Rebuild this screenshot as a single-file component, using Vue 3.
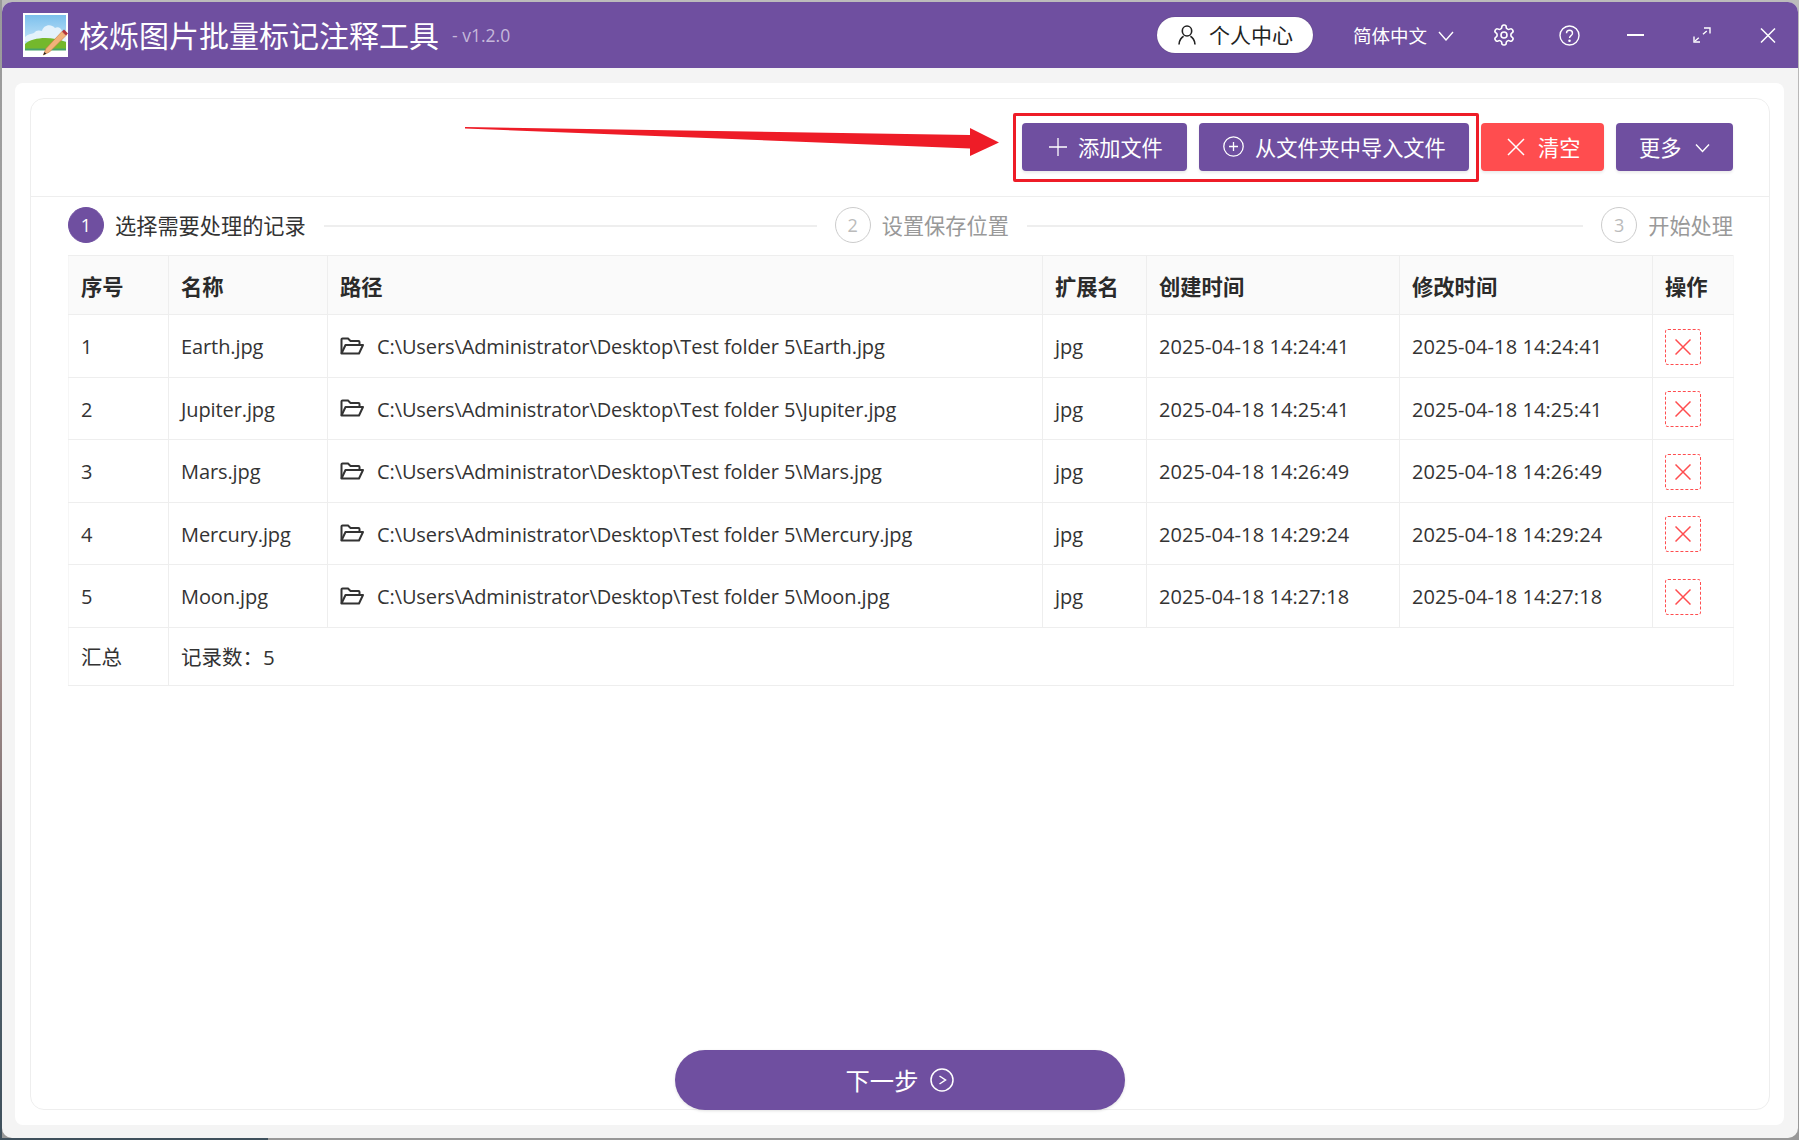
<script setup>
const rows = [
  { id: 1, name: 'Earth.jpg', time: '2025-04-18 14:24:41' },
  { id: 2, name: 'Jupiter.jpg', time: '2025-04-18 14:25:41' },
  { id: 3, name: 'Mars.jpg', time: '2025-04-18 14:26:49' },
  { id: 4, name: 'Mercury.jpg', time: '2025-04-18 14:29:24' },
  { id: 5, name: 'Moon.jpg', time: '2025-04-18 14:27:18' },
]
const base = 'C:\\Users\\Administrator\\Desktop\\Test folder 5\\'
</script>

<template>
  <div class="desk">
    <div class="window">
      <header class="titlebar">
        <svg class="logo" viewBox="0 0 45 44">
          <defs>
            <linearGradient id="sky" x1="0" y1="0" x2="0" y2="1">
              <stop offset="0" stop-color="#7cc0ec" />
              <stop offset="1" stop-color="#d4ecfb" />
            </linearGradient>
          </defs>
          <rect width="45" height="44" fill="#fff" />
          <rect x="2" y="2" width="41" height="35" fill="url(#sky)" />
          <path d="M2 24c3-3 6-3 9-4 2-3 5-3 8-2 1-6 9-8 13-3 3-2 6 0 7 3 2 0 3 1 4 2v8H2z" fill="#e4f2fb" />
          <path d="M2 31c8-7 26-8 41-2v8H2z" fill="#74b82c" />
          <rect x="2" y="35.500" width="41" height="2" fill="#46a36a" />
          <path d="M20.300 42l2.700-6.500 16-17 4 4-16.500 16.500z" fill="#f2b27a" stroke="#c77a3c" stroke-width=".6" />
          <path d="M39 18.500l2-2 4 4-2 2z" fill="#b4333a" />
          <path d="M20.300 42l1.200-3 1.800 1.700z" fill="#222" />
        </svg>
        <h1 class="title">核烁图片批量标记注释工具</h1>
        <span class="version">- v1.2.0</span>
        <div class="bar-right">
          <div class="pill">
            <svg class="user" viewBox="0 0 18 20" fill="none" stroke="#222" stroke-width="1.600">
              <ellipse cx="9" cy="6" rx="4.700" ry="5" />
              <path d="M1 19.500c0-4.500 3-7.500 4.600-8.300M17 19.500c0-4.500-3-7.500-4.600-8.300" />
            </svg>
            <span class="pill-text">个人中心</span>
          </div>
          <div class="lang">
            <span>简体中文</span>
            <svg class="lang-chev" viewBox="0 0 16 10" fill="none" stroke="#fff" stroke-width="1.400"><path d="M1 1l7 8 7-8" /></svg>
          </div>
          <svg class="gear" viewBox="0 0 24 24" fill="none" stroke="#fff" stroke-width="1.600">
            <path d="M12.220 2h-.440a2 2 0 0 0-2 2v.180a2 2 0 0 1-1 1.730l-.430.250a2 2 0 0 1-2 0l-.150-.080a2 2 0 0 0-2.730.730l-.220.380a2 2 0 0 0 .730 2.730l.150.100a2 2 0 0 1 1 1.720v.510a2 2 0 0 1-1 1.740l-.150.090a2 2 0 0 0-.730 2.730l.220.380a2 2 0 0 0 2.730.730l.150-.080a2 2 0 0 1 2 0l.430.250a2 2 0 0 1 1 1.730V20a2 2 0 0 0 2 2h.440a2 2 0 0 0 2-2v-.180a2 2 0 0 1 1-1.730l.430-.250a2 2 0 0 1 2 0l.150.080a2 2 0 0 0 2.730-.730l.220-.390a2 2 0 0 0-.730-2.730l-.150-.080a2 2 0 0 1-1-1.740v-.500a2 2 0 0 1 1-1.740l.150-.090a2 2 0 0 0 .730-2.730l-.220-.380a2 2 0 0 0-2.730-.730l-.150.080a2 2 0 0 1-2 0l-.430-.250a2 2 0 0 1-1-1.730V4a2 2 0 0 0-2-2z" />
            <circle cx="12" cy="12" r="3" />
          </svg>
          <svg class="help" viewBox="0 0 21 21" fill="none" stroke="#fff" stroke-width="1.400">
            <circle cx="10.500" cy="10.500" r="9.500" />
            <path d="M7.500 8.200c0-4 6-4 6 0 0 2.400-3 2.400-3 4.800" />
            <circle cx="10.500" cy="15.800" r=".6" fill="#fff" />
          </svg>
          <svg class="min" viewBox="0 0 17 2"><rect width="17" height="2" fill="#fff" /></svg>
          <svg class="expand" viewBox="0 0 18 16" fill="none" stroke="#fff" stroke-width="1.400">
            <path d="M2 14L16 2" stroke-dasharray="5 5.500" />
            <path d="M1 9.500V15h6M11 1h6v5.500" />
          </svg>
          <svg class="close" viewBox="0 0 16 15" fill="none" stroke="#fff" stroke-width="1.500"><path d="M1 .5l14 14M15 .5l-14 14" /></svg>
        </div>
      </header>

      <main class="panel">
        <section class="card">
          <div class="toolbar">
            <button class="btn add" type="button">
              <svg class="ic-plus" viewBox="0 0 18 18" stroke="#fff" stroke-width="1.300"><path d="M9 0v18M0 9h18" /></svg>
              <span>添加文件</span>
            </button>
            <button class="btn import" type="button">
              <svg class="ic-circle" viewBox="0 0 21 21" fill="none" stroke="#fff" stroke-width="1.300">
                <circle cx="10.500" cy="10.500" r="9.700" /><path d="M10.500 6v9M6 10.500h9" />
              </svg>
              <span>从文件夹中导入文件</span>
            </button>
            <button class="btn clear" type="button">
              <svg class="ic-x" viewBox="0 0 18 18" stroke="#fff" stroke-width="1.500"><path d="M1 1l16 16M17 1L1 17" /></svg>
              <span>清空</span>
            </button>
            <button class="btn more" type="button">
              <span>更多</span>
              <svg class="ic-chev" viewBox="0 0 15 10" fill="none" stroke="#fff" stroke-width="1.400"><path d="M1 1.500l6.500 7 6.500-7" /></svg>
            </button>
          </div>

          <div class="highlight"></div>
          <svg class="arrow" viewBox="0 0 540 32">
            <path d="M0 0L0 1.500L505 21.500V29L534 15.500L505 1V8Z" fill="#ee1c27" />
          </svg>

          <div class="steps">
            <div class="step active"><span class="num">1</span><span class="label">选择需要处理的记录</span></div>
            <div class="line first"></div>
            <div class="step"><span class="num">2</span><span class="label">设置保存位置</span></div>
            <div class="line"></div>
            <div class="step"><span class="num">3</span><span class="label">开始处理</span></div>
          </div>

          <div class="table-wrap">
            <table class="table">
              <colgroup>
                <col class="c-id" /><col class="c-name" /><col class="c-path" /><col class="c-ext" />
                <col class="c-time" /><col class="c-time" /><col class="c-op" />
              </colgroup>
              <thead>
                <tr>
                  <th>序号</th><th>名称</th><th>路径</th><th>扩展名</th><th>创建时间</th><th>修改时间</th><th>操作</th>
                </tr>
              </thead>
              <tbody>
                <tr v-for="r in rows" :key="r.id">
                  <td>{{ r.id }}</td>
                  <td class="tight">{{ r.name }}</td>
                  <td>
                    <div class="path">
                      <svg class="folder" viewBox="0 0 24 18" fill="none" stroke="#333" stroke-width="2">
                        <path d="M1.500 16.500V2.500a1 1 0 0 1 1-1h5.500l2.500 2.500h8a1 1 0 0 1 1 1V8" />
                        <path d="M1.500 16.500L5.500 8H23l-4 8.500z" stroke-linejoin="round" />
                      </svg>
                      <span class="tight">{{ base }}{{ r.name }}</span>
                    </div>
                  </td>
                  <td>jpg</td>
                  <td class="time">{{ r.time }}</td>
                  <td class="time">{{ r.time }}</td>
                  <td>
                    <div class="del">
                      <svg viewBox="0 0 16 16" stroke="#ff4d4f" stroke-width="1.500"><path d="M.500.500l15 15M15.500.500l-15 15" /></svg>
                    </div>
                  </td>
                </tr>
                <tr class="sum">
                  <td>汇总</td>
                  <td colspan="6">记录数：5</td>
                </tr>
              </tbody>
            </table>
          </div>

          <button class="next" type="button">
            <span class="next-text">下一步</span>
            <svg viewBox="0 0 24 24" fill="none" stroke="#fff" stroke-width="1.500">
              <circle cx="12" cy="12" r="11" /><path d="M9.500 8l6 4-6 4" />
            </svg>
          </button>
        </section>
      </main>
    </div>
  </div>
</template>

<style>
html, body { margin: 0; padding: 0; background: #a9a8a8; }
</style>

<style scoped>
* { box-sizing: border-box; }
.desk {
  position: relative;
  width: 1799px;
  height: 1140px;
  padding: 2px 1px 2px 2px;
  background: linear-gradient(180deg, #bcbbbb 0, #a8a8a8 50%, #989898 100%);
  overflow: hidden;
  font-family: "Open Sans", "Noto Sans CJK SC", sans-serif;
  color: #333;
}
.desk::before {
  content: "";
  position: absolute;
  left: 0;
  top: 0;
  width: 2px;
  height: 100%;
  background: linear-gradient(180deg, #9a9a9a 0, #a8a8a8 50%, #a08c8a 60%, #8a7a7a 68%, #55646e 78%, #3f505c 100%);
}
.desk::after {
  content: "";
  position: absolute;
  left: 0;
  bottom: 0;
  width: 268px;
  height: 2px;
  background: #3f505c;
}
.window {
  position: relative;
  z-index: 1;
  height: 1136px;
  display: flex;
  flex-direction: column;
  background: #f4f4f4;
  border-radius: 10px;
  overflow: hidden;
}
.titlebar {
  flex: 0 0 66px;
  display: flex;
  align-items: center;
  padding: 0 22px 0 21px;
  background: #6f4fa0;
  color: #fff;
}
.logo { width: 45px; height: 44px; margin-top: -1px; }
.title {
  margin: -2px 0 0 11px;
  font-size: 30px;
  font-weight: 400;
  line-height: 40px;
  font-family: "Noto Sans CJK SC", sans-serif;
}
.version { margin-left: 13px; font-size: 17.500px; color: #c5b8db; }
.bar-right { margin-left: auto; display: flex; align-items: center; }
.pill {
  width: 156px;
  height: 36px;
  border-radius: 18px;
  background: #fff;
  display: flex;
  align-items: center;
  padding-left: 21px;
  gap: 13px;
  color: #222;
  font-size: 21px;
  box-shadow: 0 0 1px rgba(0,0,0,.4);
}
.pill-text { margin-top: -2px; }
.user { width: 18px; height: 20px; }
.lang { display: flex; align-items: center; margin-left: 40px; gap: 11px; font-size: 18.500px; color: #fff; }
.lang span { margin-top: -1px; }
.lang-chev { width: 16px; height: 10px; margin-top: 2px; }
.gear { width: 24px; height: 24px; margin-left: 38px; }
.help { width: 21px; height: 21px; margin-left: 43px; }
.min { width: 17px; height: 2px; margin-left: 47px; }
.expand { width: 18px; height: 16px; margin-left: 49px; }
.close { width: 16px; height: 15px; margin-left: 49px; }

.panel {
  flex: 1;
  margin: 15px 14px 13px 13px;
  padding: 15px 14px 15px 15px;
  background: #fff;
  border-radius: 8px;
  display: flex;
  min-height: 0;
}
.card {
  flex: 1;
  min-width: 0;
  position: relative;
  display: flex;
  flex-direction: column;
  border: 1px solid #eee;
  border-radius: 14px;
}
.toolbar {
  flex: 0 0 98px;
  display: flex;
  align-items: center;
  justify-content: flex-end;
  gap: 12px;
  padding: 0 36px 2px 0;
  border-bottom: 1px solid #eee;
}
.btn {
  height: 48px;
  border: 0;
  border-radius: 4px;
  display: flex;
  align-items: center;
  padding: 0;
  background: #6f4fa0;
  color: #fff;
  font-family: inherit;
  font-size: 21.200px;
  box-shadow: 0 2px 3px rgba(0,0,0,.08);
}
.btn span { margin-top: -1px; }
.add { width: 165px; padding-left: 27px; gap: 11px; }
.import { width: 270px; padding-left: 24px; gap: 11px; }
.clear { width: 123px; padding-left: 26px; gap: 13px; background: #ff4d4f; }
.more { width: 117px; padding-left: 23px; gap: 14px; }
.ic-plus { width: 18px; height: 18px; }
.ic-circle { width: 21px; height: 21px; }
.ic-x { width: 18px; height: 18px; }
.ic-chev { width: 15px; height: 10px; margin-top: 2px; }
.highlight {
  position: absolute;
  left: 982px;
  top: 14px;
  width: 466px;
  height: 69px;
  border: 3px solid #ee1c27;
  border-radius: 2px;
  pointer-events: none;
}
.arrow {
  position: absolute;
  left: 434px;
  top: 28px;
  width: 540px;
  height: 32px;
  pointer-events: none;
}
.steps {
  flex: 0 0 58px;
  display: flex;
  align-items: center;
  padding: 0 36px 2px 37px;
  font-size: 21.200px;
  color: #999;
}
.step { display: flex; align-items: center; gap: 11px; white-space: nowrap; }
.step.active { color: #333; }
.label { margin-top: -2px; }
.num {
  width: 36px;
  height: 36px;
  border-radius: 50%;
  border: 1px solid #ccc;
  display: flex;
  align-items: center;
  justify-content: center;
  font-size: 18px;
  color: #bbb;
}
.active .num { background: #6f4fa0; border-color: #6f4fa0; color: #fff; }
.line { flex: 1; height: 2px; background: #eee; margin: 2px 18px 0; }
.line.first { flex: 0 0 493px; }

.table-wrap { padding: 0 36px 0 37px; }
.table {
  width: 100%;
  table-layout: fixed;
  border-collapse: collapse;
  font-size: 20px;
  color: #333;
}
.c-id { width: 100px; }
.c-name { width: 159px; }
.c-path { width: 715px; }
.c-ext { width: 104px; }
.c-time { width: 253px; }
.c-op { width: 81px; }
.table th, .table td {
  padding: 0 12px;
  text-align: left;
  border: 1px solid #eee;
  white-space: nowrap;
}
.table tr > :first-child { border-left-color: #f6f6f6; }
.table tr > :last-child { border-right-color: #f6f6f6; }
.table th {
  height: 59px;
  background: #fafafa;
  font-size: 21.300px;
  font-weight: 700;
  font-family: "Noto Sans CJK SC", sans-serif;
  color: #2b2b2b;
}
.table td { height: 62.500px; padding-top: 2px; }
.tight { letter-spacing: -.1px; }
.time { letter-spacing: .08px; }
.sum td { height: 58px; font-size: 20.500px; padding-top: 0; }
.path { display: flex; align-items: center; gap: 13px; }
.folder { width: 24px; height: 18px; margin-top: -2px; flex: none; }
.del {
  width: 36px;
  height: 36px;
  border: 1px dashed #ff4d4f;
  border-radius: 3px;
  display: flex;
  align-items: center;
  justify-content: center;
}
.del svg { width: 16px; height: 16px; }
.next {
  margin-top: auto;
  margin-bottom: -1px;
  align-self: center;
  width: 450px;
  height: 60px;
  border: 0;
  border-radius: 30px;
  background: #6f4fa0;
  color: #fff;
  font-family: inherit;
  font-size: 24.300px;
  display: flex;
  align-items: center;
  justify-content: center;
  gap: 12px;
  box-shadow: 0 1px 3px rgba(0,0,0,.12);
}
.next-text { margin-top: -2px; }
.next svg { width: 24px; height: 24px; }
</style>
